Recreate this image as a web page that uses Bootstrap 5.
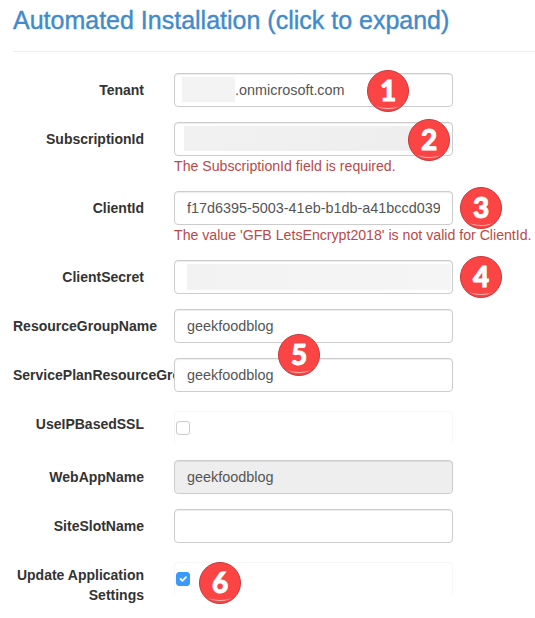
<!DOCTYPE html>
<html lang="en">
<head>
<meta charset="utf-8">
<title>Automated Installation</title>
<link rel="stylesheet" href="https://cdn.jsdelivr.net/npm/bootstrap@5.3.0/dist/css/bootstrap.min.css">
<style>
html,body{height:618px;overflow:hidden;}
body{font-family:"Liberation Sans",Arial,sans-serif;font-size:14px;line-height:20px;color:#333;background:#fff;}
.page-wrap{padding:0 0 0 13px;}
.page-title{font-family:"Liberation Sans",Arial,sans-serif;font-size:25px;line-height:27px;font-weight:400;color:#428bca;margin:7px 0 0;padding-top:0;white-space:nowrap;-webkit-text-stroke:.4px #428bca;}
.title-rule{margin:17px 0 21px;border:0;border-top:1px solid #eee;opacity:1;}
.field-row{display:flex;margin-bottom:15px;}
.field-label{width:161px;flex:none;padding:7px 30px 0 0;text-align:right;font-weight:700;overflow:hidden;margin:0;line-height:20px;}
.field-col{position:relative;width:361px;flex:none;}
.field-input.form-control{width:279px;height:34px;padding:6px 12px;font-size:14.4px;line-height:20px;color:#555;border:1px solid #ccc;border-radius:4px;box-shadow:inset 0 1px 1px rgba(0,0,0,.075);background-color:#fff;}
.field-input.tenant-input{padding-left:60px;}
.field-input.form-control:disabled{background-color:#eee;opacity:1;}
.field-error{color:#b94a48;font-size:14.15px;line-height:20px;height:20px;white-space:nowrap;}
.check-box{margin-top:4px;width:279px;height:34px;border:1px solid #f7f7f7;border-bottom-color:#fdfdfd;border-radius:4px;padding:9px 0 0 1px;}
.check-box .form-check-input{display:block;width:14px;height:14px;margin:0;border:1px solid #ccc;border-radius:3px;}
.check-box .form-check-input:checked{background-color:#3b99fc;border-color:#3b99fc;}
.masked{position:absolute;background:#f3f3f3;}
.mask-tenant{left:8px;top:4px;width:53px;height:25px;}
.mask-sub{left:10px;top:4px;width:240px;height:25px;background:linear-gradient(90deg,#f1f1f1,#efeeee);}
.mask-secret{left:13px;top:4px;width:264px;height:26px;background:linear-gradient(90deg,#f2f2f2,#f6f5f5);}
.callout{position:absolute;width:42px;height:42px;border-radius:50%;background:#fb4545;border:1px solid #c8383c;color:#fff;font-family:Lato,"Open Sans",sans-serif;font-weight:900;font-size:28px;line-height:39px;text-align:center;overflow:hidden;z-index:2;-webkit-text-stroke:.9px #fff;}
.callout::after{content:"";position:absolute;left:9px;right:9px;bottom:2px;height:7px;border-bottom:1.5px solid #fdb0b0;border-radius:0 0 50% 50%;}
.call-1{left:193px;top:-3px;}
.call-2{left:234px;top:-3px;}
.call-3{left:286px;top:-4px;}
.call-4{left:286px;top:-4px;}
.call-5{left:104px;top:25px;}
.call-6{left:25px;top:4px;}
</style>
</head>
<body>
<div class="page-wrap">
  <h4 class="page-title">Automated Installation (click to expand)</h4>
  <hr class="title-rule">
  <form>
    <div class="field-row">
      <label class="field-label">Tenant</label>
      <div class="field-col">
        <input class="form-control field-input tenant-input" type="text" value=".onmicrosoft.com" aria-label="Tenant">
        <div class="masked mask-tenant"></div>
        <div class="callout call-1">1</div>
      </div>
    </div>
    <div class="field-row">
      <label class="field-label">SubscriptionId</label>
      <div class="field-col">
        <input class="form-control field-input" type="text" aria-label="SubscriptionId">
        <div class="masked mask-sub"></div>
        <div class="callout call-2">2</div>
        <div class="field-error">The SubscriptionId field is required.</div>
      </div>
    </div>
    <div class="field-row">
      <label class="field-label">ClientId</label>
      <div class="field-col">
        <input class="form-control field-input" type="text" value="f17d6395-5003-41eb-b1db-a41bccd039" aria-label="ClientId">
        <div class="callout call-3">3</div>
        <div class="field-error">The value 'GFB LetsEncrypt2018' is not valid for ClientId.</div>
      </div>
    </div>
    <div class="field-row">
      <label class="field-label">ClientSecret</label>
      <div class="field-col">
        <input class="form-control field-input" type="text" aria-label="ClientSecret">
        <div class="masked mask-secret"></div>
        <div class="callout call-4">4</div>
      </div>
    </div>
    <div class="field-row">
      <label class="field-label">ResourceGroupName</label>
      <div class="field-col">
        <input class="form-control field-input" type="text" value="geekfoodblog" aria-label="ResourceGroupName">
        <div class="callout call-5">5</div>
      </div>
    </div>
    <div class="field-row">
      <label class="field-label">ServicePlanResourceGroupName</label>
      <div class="field-col">
        <input class="form-control field-input" type="text" value="geekfoodblog" aria-label="ServicePlanResourceGroupName">
      </div>
    </div>
    <div class="field-row">
      <label class="field-label">UseIPBasedSSL</label>
      <div class="field-col">
        <div class="check-box"><input class="form-check-input" type="checkbox" aria-label="UseIPBasedSSL"></div>
      </div>
    </div>
    <div class="field-row">
      <label class="field-label">WebAppName</label>
      <div class="field-col">
        <input class="form-control field-input" type="text" value="geekfoodblog" disabled aria-label="WebAppName">
      </div>
    </div>
    <div class="field-row">
      <label class="field-label">SiteSlotName</label>
      <div class="field-col">
        <input class="form-control field-input" type="text" aria-label="SiteSlotName">
      </div>
    </div>
    <div class="field-row">
      <label class="field-label">Update Application Settings</label>
      <div class="field-col">
        <div class="check-box"><input class="form-check-input" type="checkbox" checked aria-label="Update Application Settings"></div>
        <div class="callout call-6">6</div>
      </div>
    </div>
  </form>
</div>
<script src="https://cdn.jsdelivr.net/npm/bootstrap@5.3.0/dist/js/bootstrap.bundle.min.js"></script>
</body>
</html>
